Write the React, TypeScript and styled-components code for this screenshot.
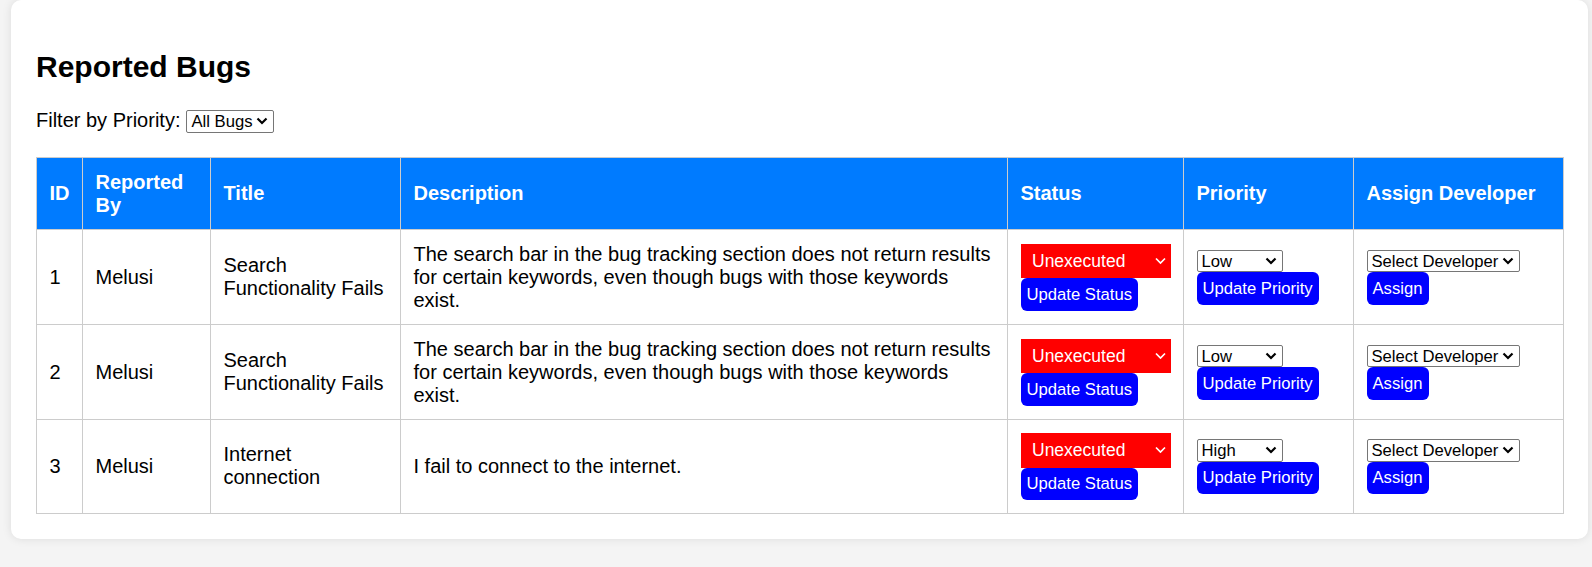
import React, { useState } from "react";
import styled, { createGlobalStyle } from "styled-components";

type Bug = {
  id: number;
  reportedBy: string;
  title: string;
  description: string;
  status: string;
  priority: string;
};

const bugs: Bug[] = [
  {
    id: 1,
    reportedBy: "Melusi",
    title: "Search Functionality Fails",
    description:
      "The search bar in the bug tracking section does not return results for certain keywords, even though bugs with those keywords exist.",
    status: "Unexecuted",
    priority: "Low",
  },
  {
    id: 2,
    reportedBy: "Melusi",
    title: "Search Functionality Fails",
    description:
      "The search bar in the bug tracking section does not return results for certain keywords, even though bugs with those keywords exist.",
    status: "Unexecuted",
    priority: "Low",
  },
  {
    id: 3,
    reportedBy: "Melusi",
    title: "Internet connection",
    description: "I fail to connect to the internet.",
    status: "Unexecuted",
    priority: "High",
  },
];

const columns = [
  { label: "ID", width: 46 },
  { label: "Reported By", width: 128 },
  { label: "Title", width: 190 },
  { label: "Description", width: 607 },
  { label: "Status", width: 176 },
  { label: "Priority", width: 170 },
  { label: "Assign Developer", width: 210 },
];

const GlobalStyle = createGlobalStyle`
  body {
    margin: 0;
    background: #f4f4f4;
    color: #000;
    font-family: "Liberation Sans", Arial, sans-serif;
  }
`;

const Page = styled.div`
  padding: 0 4px 29px 11px;
`;

const Card = styled.div`
  background: #fff;
  padding: 25px;
  border-radius: 10px;
  box-shadow: 0 0 10px rgba(0, 0, 0, 0.1);
`;

const Heading = styled.h2`
  margin: 25px 0 24px;
  font-size: 30px;
  font-weight: bold;
`;

const FilterRow = styled.div`
  display: flex;
  align-items: center;
  gap: 6px;
  font-size: 20px;
  margin-bottom: 24.7px;
`;

const Table = styled.table`
  width: 100%;
  border-collapse: collapse;
  table-layout: fixed;
  font-size: 20px;
`;

const Col = styled.col<{ $w: number }>`
  width: ${(p) => p.$w}px;
`;

const Th = styled.th`
  background: #007bff;
  color: #fff;
  font-weight: bold;
  text-align: left;
  padding: 12.5px;
  border: 1px solid #ccc;
  vertical-align: middle;
`;

const Td = styled.td`
  padding: 12.5px;
  border: 1px solid #ccc;
  vertical-align: middle;
  text-align: left;
`;

const Stack = styled.div`
  display: flex;
  flex-direction: column;
  align-items: flex-start;
`;

const SelectWrap = styled.div<{ $w: number; $offset?: number }>`
  position: relative;
  width: ${(p) => p.$w}px;
  margin-top: ${(p) => p.$offset || 0}px;
`;

const PlainSelect = styled.select`
  appearance: none;
  display: block;
  box-sizing: border-box;
  width: 100%;
  height: 22.7px;
  padding: 0 0 0 4px;
  border: 1px solid #767676;
  border-radius: 2px;
  background: #fff;
  color: #000;
  font-family: "Liberation Sans", Arial, sans-serif;
  font-size: 16.67px;
  outline: none;
`;

const StatusSelect = styled.select`
  appearance: none;
  display: block;
  box-sizing: border-box;
  width: 100%;
  height: 34.7px;
  padding: 0 0 0 11.5px;
  border: none;
  border-radius: 0;
  background: #ff0000;
  color: #fff;
  font-family: "Liberation Sans", Arial, sans-serif;
  font-size: 17.5px;
  outline: none;
`;

const Arrow = styled.svg<{ $right: number }>`
  position: absolute;
  top: 50%;
  right: ${(p) => p.$right}px;
  transform: translateY(-50%);
  pointer-events: none;
`;

const ActionButton = styled.button`
  display: block;
  padding: 6.25px 6px;
  border: none;
  border-radius: 6px;
  background: #0000ff;
  color: #fff;
  font-family: "Liberation Sans", Arial, sans-serif;
  font-size: 16.67px;
  line-height: normal;
  cursor: pointer;
`;

const DarkChevron = () => (
  <Arrow $right={6} width="12" height="8" viewBox="0 0 12 8">
    <polyline points="1.5,1.5 6,6 10.5,1.5" fill="none" stroke="#000" strokeWidth="2.2" />
  </Arrow>
);

const LightChevron = () => (
  <Arrow $right={5} width="11" height="7" viewBox="0 0 11 7">
    <polyline points="1,1 5.5,5.5 10,1" fill="none" stroke="#fff" strokeWidth="1.7" />
  </Arrow>
);

const BugRow: React.FC<{ bug: Bug }> = ({ bug }) => {
  const [status, setStatus] = useState(bug.status);
  const [priority, setPriority] = useState(bug.priority);
  const [dev, setDev] = useState("");

  return (
    <tr>
      <Td>{bug.id}</Td>
      <Td>{bug.reportedBy}</Td>
      <Td>{bug.title}</Td>
      <Td>{bug.description}</Td>
      <Td>
        <Stack>
          <SelectWrap $w={150}>
            <StatusSelect value={status} onChange={(e) => setStatus(e.target.value)}>
              <option>Unexecuted</option>
              <option>In Progress</option>
              <option>Resolved</option>
            </StatusSelect>
            <LightChevron />
          </SelectWrap>
          <ActionButton>Update Status</ActionButton>
        </Stack>
      </Td>
      <Td>
        <Stack>
          <SelectWrap $w={86.7}>
            <PlainSelect value={priority} onChange={(e) => setPriority(e.target.value)}>
              <option>Low</option>
              <option>Medium</option>
              <option>High</option>
            </PlainSelect>
            <DarkChevron />
          </SelectWrap>
          <ActionButton>Update Priority</ActionButton>
        </Stack>
      </Td>
      <Td>
        <Stack>
          <SelectWrap $w={153.3}>
            <PlainSelect value={dev} onChange={(e) => setDev(e.target.value)}>
              <option value="">Select Developer</option>
              <option value="thabo">Thabo</option>
              <option value="naledi">Naledi</option>
            </PlainSelect>
            <DarkChevron />
          </SelectWrap>
          <ActionButton>Assign</ActionButton>
        </Stack>
      </Td>
    </tr>
  );
};

const App: React.FC = () => {
  const [filter, setFilter] = useState("all");

  const shown = filter === "all" ? bugs : bugs.filter((b) => b.priority.toLowerCase() === filter);

  return (
    <>
      <GlobalStyle />
      <Page>
        <Card>
          <Heading>Reported Bugs</Heading>
          <FilterRow>
            <span>Filter by Priority:</span>
            <SelectWrap $w={88} $offset={2}>
              <PlainSelect value={filter} onChange={(e) => setFilter(e.target.value)}>
                <option value="all">All Bugs</option>
                <option value="low">Low</option>
                <option value="medium">Medium</option>
                <option value="high">High</option>
              </PlainSelect>
              <DarkChevron />
            </SelectWrap>
          </FilterRow>
          <Table>
            <colgroup>
              {columns.map((c) => (
                <Col key={c.label} $w={c.width} />
              ))}
            </colgroup>
            <thead>
              <tr>
                {columns.map((c) => (
                  <Th key={c.label}>{c.label}</Th>
                ))}
              </tr>
            </thead>
            <tbody>
              {shown.map((bug) => (
                <BugRow key={bug.id} bug={bug} />
              ))}
            </tbody>
          </Table>
        </Card>
      </Page>
    </>
  );
};

export default App;
